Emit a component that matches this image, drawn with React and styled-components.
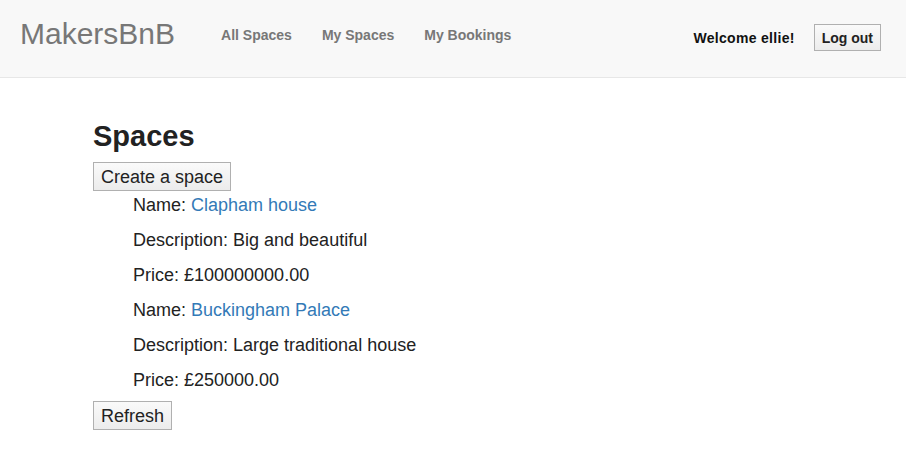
import React from "react";
import styled, { createGlobalStyle } from "styled-components";

const Global = createGlobalStyle`
  body {
    margin: 0;
    background: #fff;
    font-family: "Liberation Sans", Arial, sans-serif;
    color: #222;
  }
`;

const Navbar = styled.nav`
  height: 78px;
  background: #f8f8f8;
  border-bottom: 1px solid #e7e7e7;
  display: flex;
  align-items: center;
  padding: 0 25px 0 20px;
  box-sizing: border-box;
`;

const Brand = styled.div`
  font-size: 30px;
  color: #777;
  margin-top: -10px;
  margin-right: 31px;
`;

const NavLinks = styled.div`
  display: flex;
  flex: 1;
  margin-top: -7px;
`;

const NavLink = styled.a`
  font-size: 14px;
  font-weight: bold;
  color: #777;
  padding: 0 15px;
  text-decoration: none;
`;

const Welcome = styled.span`
  font-size: 14px;
  font-weight: bold;
  color: #111;
  letter-spacing: 0.3px;
  margin-right: 19px;
  margin-top: -2px;
`;

const Button = styled.button`
  font-family: "Liberation Sans", Arial, sans-serif;
  font-size: ${(p) => (p.$small ? "14px" : "18px")};
  font-weight: ${(p) => (p.$small ? "bold" : "normal")};
  color: #222;
  background: linear-gradient(#fafafa, #ececec);
  border: 1px solid #b0b0b0;
  border-radius: 0;
  padding: ${(p) => (p.$small ? "3px 7px" : "3px 7px")};
  height: ${(p) => (p.$small ? "27px" : "29px")};
  margin-top: ${(p) => (p.$small ? "-2px" : "0")};
  line-height: 1;
`;

const Main = styled.main`
  padding: 41px 0 0 93px;
`;

const Title = styled.h1`
  font-size: 29px;
  font-weight: bold;
  margin: 0 0 9px;
  line-height: 34px;
`;

const List = styled.div`
  padding: 0 0 3px 40px;
  margin-top: -3px;
`;

const Row = styled.p`
  margin: 0;
  font-size: 18px;
  line-height: 35px;
  color: #222;
`;

const Link = styled.a`
  color: #337ab7;
  text-decoration: none;
`;

const spaces = [
  { name: "Clapham house", description: "Big and beautiful", price: "100000000.00" },
  { name: "Buckingham Palace", description: "Large traditional house", price: "250000.00" },
];

export default function App() {
  return (
    <>
      <Global />
      <Navbar>
        <Brand>MakersBnB</Brand>
        <NavLinks>
          <NavLink href="#">All Spaces</NavLink>
          <NavLink href="#">My Spaces</NavLink>
          <NavLink href="#">My Bookings</NavLink>
        </NavLinks>
        <Welcome>Welcome ellie!</Welcome>
        <Button $small>Log out</Button>
      </Navbar>
      <Main>
        <Title>Spaces</Title>
        <Button>Create a space</Button>
        <List>
          {spaces.map((s) => (
            <React.Fragment key={s.name}>
              <Row>
                Name: <Link href="#">{s.name}</Link>
              </Row>
              <Row>Description: {s.description}</Row>
              <Row>Price: £{s.price}</Row>
            </React.Fragment>
          ))}
        </List>
        <Button>Refresh</Button>
      </Main>
    </>
  );
}
